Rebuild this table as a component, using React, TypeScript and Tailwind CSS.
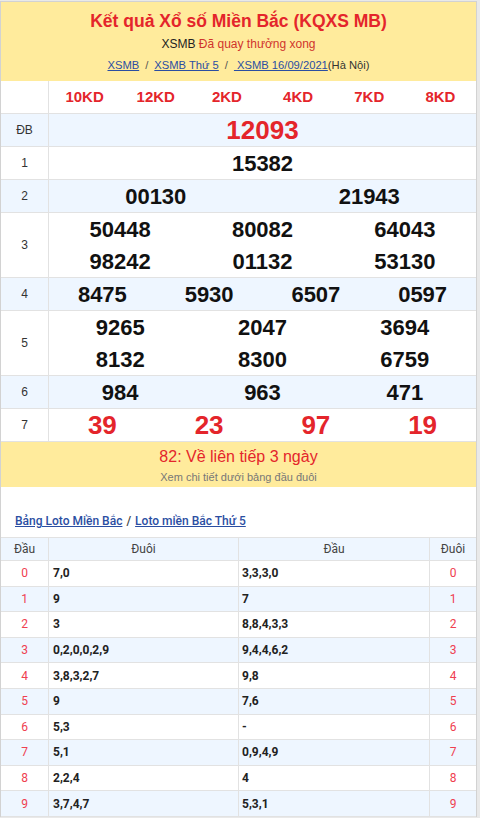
import React from "react";

const rows: { label: string; nums: string[]; cols: number; kind: "db" | "n" | "big"; bg: boolean }[] = [
  { label: "ĐB", nums: ["12093"], cols: 1, kind: "db", bg: true },
  { label: "1", nums: ["15382"], cols: 1, kind: "n", bg: false },
  { label: "2", nums: ["00130", "21943"], cols: 2, kind: "n", bg: true },
  { label: "3", nums: ["50448", "80082", "64043", "98242", "01132", "53130"], cols: 3, kind: "n", bg: false },
  { label: "4", nums: ["8475", "5930", "6507", "0597"], cols: 4, kind: "n", bg: true },
  { label: "5", nums: ["9265", "2047", "3694", "8132", "8300", "6759"], cols: 3, kind: "n", bg: false },
  { label: "6", nums: ["984", "963", "471"], cols: 3, kind: "n", bg: true },
  { label: "7", nums: ["39", "23", "97", "19"], cols: 4, kind: "big", bg: false },
];

const gridCls: Record<number, string> = {
  1: "grid grid-cols-1",
  2: "grid grid-cols-2",
  3: "grid grid-cols-3",
  4: "grid grid-cols-4",
};

const loto: [string, string, string, string][] = [
  ["0", "7,0", "3,3,3,0", "0"],
  ["1", "9", "7", "1"],
  ["2", "3", "8,8,4,3,3", "2"],
  ["3", "0,2,0,0,2,9", "9,4,4,6,2", "3"],
  ["4", "3,8,3,2,7", "9,8", "4"],
  ["5", "9", "7,6", "5"],
  ["6", "5,3", "-", "6"],
  ["7", "5,1", "0,9,4,9", "7"],
  ["8", "2,2,4", "4", "8"],
  ["9", "3,7,4,7", "5,3,1", "9"],
];

export default function App() {
  return (
    <div className="w-[480px] h-[818px] overflow-hidden bg-[#e9e9e9] pt-[1px]">
      <div
        className="w-[477px] bg-white border-l border-r border-t border-[#d2d2d2]"
        style={{ fontFamily: '"Liberation Sans", Arial, sans-serif' }}
      >
        {/* Header */}
        <div className="bg-[#ffeb9c] h-[79px] flex flex-col items-center">
          <div className="text-[17.5px] leading-none font-bold text-[#e4252b] mt-[11px]">
            Kết quả Xổ số Miền Bắc (KQXS MB)
          </div>
          <div className="text-[12px] leading-none mt-[7px] text-[#222]">
            XSMB <span className="text-[#d0342c]">Đã quay thưởng xong</span>
          </div>
          <div className="text-[11.2px] leading-none mt-[10px] text-[#555]">
            <span className="underline text-[#2b4ea2]">XSMB</span>
            <span className="mx-[6px]">/</span>
            <span className="underline text-[#2b4ea2]">XSMB Thứ 5</span>
            <span className="mx-[6px]">/</span>
            <span className="underline text-[#2b4ea2]">&nbsp;XSMB 16/09/2021</span>
            <span className="text-[#333]">(Hà Nội)</span>
          </div>
        </div>

        {/* Prize table */}
        <div>
          <div className="flex h-[33px] border-b border-[#e2e2e2]">
            <div className="w-[48px] border-r border-[#e2e2e2]" />
            <div className="flex-1 grid grid-cols-6">
              {["10KD", "12KD", "2KD", "4KD", "7KD", "8KD"].map((k) => (
                <div key={k} className="flex items-center justify-center text-[15px] font-bold text-[#e4252b]">
                  {k}
                </div>
              ))}
            </div>
          </div>
          {rows.map((r) => (
            <div
              key={r.label}
              className={`flex border-b border-[#e2e2e2] ${r.bg ? "bg-[#eef6ff]" : "bg-white"}`}
            >
              <div className="w-[48px] border-r border-[#e2e2e2] flex items-center justify-center text-[12px] text-[#333]">
                {r.label}
              </div>
              <div className={`flex-1 ${gridCls[r.cols]}`}>
                {r.nums.map((n, i) => (
                  <div
                    key={i}
                    className={`h-[32px] flex items-center justify-center ${
                      r.kind === "db"
                        ? "text-[26px] font-bold text-[#e4252b]"
                        : r.kind === "big"
                        ? "text-[26px] font-bold text-[#e4252b]"
                        : "text-[22px] font-bold text-[#111]"
                    }`}
                  >
                    {n}
                  </div>
                ))}
              </div>
            </div>
          ))}
        </div>

        {/* Yellow note */}
        <div className="bg-[#ffeb9c] h-[45px] flex flex-col items-center">
          <div className="text-[16px] leading-none text-[#e4252b] mt-[7px]">82: Về liên tiếp 3 ngày</div>
          <div className="text-[11px] leading-none text-[#777] mt-[7px]">Xem chi tiết dưới bảng đầu đuôi</div>
        </div>

        {/* Loto */}
        <div style={{ fontFamily: "Roboto, Arial, sans-serif" }}>
          <div className="h-[50px] flex items-end pl-[14px] pb-[7px] text-[12px] font-medium text-[#2b4ea2]">
            <span className="underline">Bảng Loto Miền Bắc</span>
            <span className="text-[#444] mx-[4px]">/</span>
            <span className="underline">Loto miền Bắc Thứ 5</span>
          </div>
          <div className="border-t border-[#e2e2e2]">
            <div className="grid grid-cols-[48px_190px_191px_1fr] h-[23px] bg-[#eef6ff] border-b border-[#e2e2e2] text-[12px] text-[#444]">
              <div className="flex items-center justify-center border-r border-[#e2e2e2]">Đầu</div>
              <div className="flex items-center justify-center border-r border-[#e2e2e2]">Đuôi</div>
              <div className="flex items-center justify-center border-r border-[#e2e2e2]">Đầu</div>
              <div className="flex items-center justify-center">Đuôi</div>
            </div>
            {loto.map((l, i) => (
              <div
                key={i}
                className={`grid grid-cols-[48px_190px_191px_1fr] h-[25.6px] border-b border-[#e2e2e2] text-[12px] ${
                  i % 2 === 1 ? "bg-[#eef6ff]" : "bg-white"
                }`}
              >
                <div className="flex items-center justify-center border-r border-[#e2e2e2] text-[#ef4050]">{l[0]}</div>
                <div className="flex items-center pl-[4px] border-r border-[#e2e2e2] font-bold text-[#222]">{l[1]}</div>
                <div className="flex items-center pl-[3px] border-r border-[#e2e2e2] font-bold text-[#222]">{l[2]}</div>
                <div className="flex items-center justify-center text-[#ef4050]">{l[3]}</div>
              </div>
            ))}
          </div>
        </div>
      </div>
    </div>
  );
}
